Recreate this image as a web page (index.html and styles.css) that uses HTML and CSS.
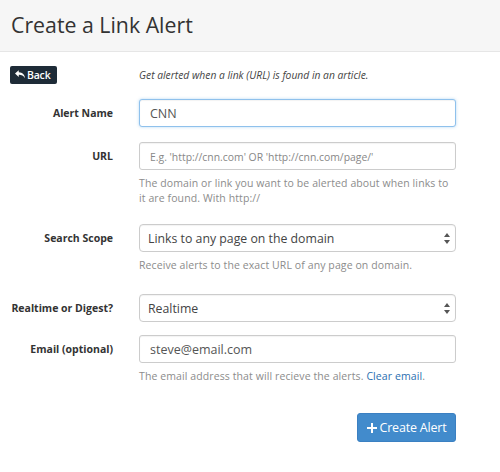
FILE: index.html
```html
<!DOCTYPE html>
<html>
<head>
<meta charset="utf-8">
<link rel="stylesheet" href="styles.css">
</head>
<body>
<header class="page-header">
  <h1 class="title">Create a Link Alert</h1>
</header>
<main class="form">
  <div class="row row-back">
    <div class="label-cell back-cell">
      <a class="btn-back" href="#"><svg class="reply-icon" viewBox="0 0 16 14" width="10" height="9"><path d="M6 0 L0 5.5 L6 11 L6 7.5 C10 7.3 13.5 8.8 16 13 C15.4 7.5 12 3.8 6 3.5 Z" fill="#fff"/></svg>Back</a>
    </div>
    <p class="intro">Get alerted when a link (URL) is found in an article.</p>
  </div>

  <div class="row row-name">
    <label class="label-cell">Alert Name</label>
    <div class="field"><input class="control focused" type="text" value="CNN"></div>
  </div>

  <div class="row row-url">
    <label class="label-cell">URL</label>
    <div class="field">
      <input class="control placeholder" type="text" placeholder="E.g. 'http://cnn.com' OR 'http://cnn.com/page/'">
      <p class="help">The domain or link you want to be alerted about when links to it are found. With http://</p>
    </div>
  </div>

  <div class="row row-scope">
    <label class="label-cell">Search Scope</label>
    <div class="field">
      <div class="select-wrap">
        <select class="control select"><option>Links to any page on the domain</option></select>
        <svg class="arrows" viewBox="0 0 6 11" width="6" height="11"><path d="M3 0 L6 4 L0 4 Z M3 11 L6 7 L0 7 Z" fill="#555"/></svg>
      </div>
      <p class="help">Receive alerts to the exact URL of any page on domain.</p>
    </div>
  </div>

  <div class="row row-digest">
    <label class="label-cell">Realtime or Digest?</label>
    <div class="field">
      <div class="select-wrap">
        <select class="control select"><option>Realtime</option></select>
        <svg class="arrows" viewBox="0 0 6 11" width="6" height="11"><path d="M3 0 L6 4 L0 4 Z M3 11 L6 7 L0 7 Z" fill="#555"/></svg>
      </div>
    </div>
  </div>

  <div class="row row-email">
    <label class="label-cell">Email (optional)</label>
    <div class="field">
      <input class="control" type="text" value="steve@email.com">
      <p class="help">The email address that will recieve the alerts. <a class="link" href="#">Clear email</a>.</p>
    </div>
  </div>

  <div class="actions">
    <button class="btn-primary" type="button"><svg class="plus" viewBox="0 0 10 10" width="10" height="10"><path d="M4 0 H6 V4 H10 V6 H6 V10 H4 V6 H0 V4 H4 Z" fill="#fff"/></svg>Create Alert</button>
  </div>
</main>
</body>
</html>
```

FILE: styles.css
```css
* { box-sizing: border-box; }
html, body { margin: 0; padding: 0; background: #fff; }
body {
  font-family: "Open Sans", "Liberation Sans", sans-serif;
  color: #333;
  width: 500px;
}
.page-header {
  height: 52px;
  background: #f6f6f6;
  border-bottom: 1px solid #e6e6e6;
  padding: 11px 0 0 11px;
}
.title {
  margin: 0;
  font-size: 21.3px;
  font-weight: 400;
  line-height: 28px;
  color: #333;
}
.form { padding: 0; }
.row {
  display: grid;
  grid-template-columns: 113px 317px;
  column-gap: 26px;
  align-items: start;
}
.label-cell {
  display: block;
  text-align: right;
  font-size: 10.5px;
  font-weight: 700;
  line-height: 28px;
  color: #333;
}
.row-back { margin-top: 14px; }
.back-cell { text-align: left; padding-left: 10px; line-height: 18px; }
.btn-back {
  display: inline-flex;
  align-items: center;
  gap: 2px;
  height: 18px;
  width: 47px;
  padding: 0 0 0 5px;
  background: #1e2b37;
  color: #fff;
  font-size: 10.5px;
  font-weight: 600;
  text-decoration: none;
  border-radius: 2px;
  letter-spacing: -0.2px;
}
.reply-icon { flex: none; margin-top: -1px; }
.intro {
  margin: 0;
  font-size: 10.3px;
  font-style: italic;
  line-height: 18px;
  color: #444;
}
.row-name { margin-top: 15px; }
.row-url { margin-top: 15px; }
.row-scope { margin-top: 18px; }
.row-digest { margin-top: 21px; }
.row-email { margin-top: 13px; }
.field { display: flex; flex-direction: column; }
.control {
  display: block;
  width: 317px;
  height: 28px;
  margin: 0;
  padding: 0 10px;
  border: 1px solid #ccc;
  border-radius: 3px;
  background: #fff;
  font-family: "Open Sans", "Liberation Sans", sans-serif;
  font-size: 12.5px;
  color: #555;
  box-shadow: inset 0 1px 1px rgba(0,0,0,0.05);
  outline: none;
}
.control::placeholder { color: #888; font-size: 10.4px; }
.control.focused {
  border-color: #8fc1ec;
  box-shadow: inset 0 1px 1px rgba(0,0,0,0.05), 0 0 3px rgba(102,175,233,0.5);
}
.select-wrap { position: relative; width: 317px; }
.select {
  -webkit-appearance: none;
  appearance: none;
  font-size: 12.3px;
  color: #444;
  padding-left: 8px;
  border-radius: 4px;
}
.arrows { position: absolute; right: 6px; top: 9px; }
.help {
  margin: 6px 0 0;
  font-size: 10.5px;
  line-height: 15px;
  letter-spacing: 0.1px;
  color: #8c8c8c;
}
.link { color: #2a6fb0; text-decoration: none; }
.actions {
  display: flex;
  justify-content: flex-end;
  width: 456px;
  margin-top: 29px;
}
.btn-primary {
  display: inline-flex;
  align-items: center;
  gap: 3px;
  height: 29px;
  width: 99px;
  justify-content: center;
  border: 1px solid #3b80c2;
  border-radius: 3px;
  background: #428bcc;
  color: #fff;
  font-family: "Open Sans", "Liberation Sans", sans-serif;
  font-size: 12.5px;
  padding: 0;
  letter-spacing: -0.2px;
}
.plus { flex: none; }
```
